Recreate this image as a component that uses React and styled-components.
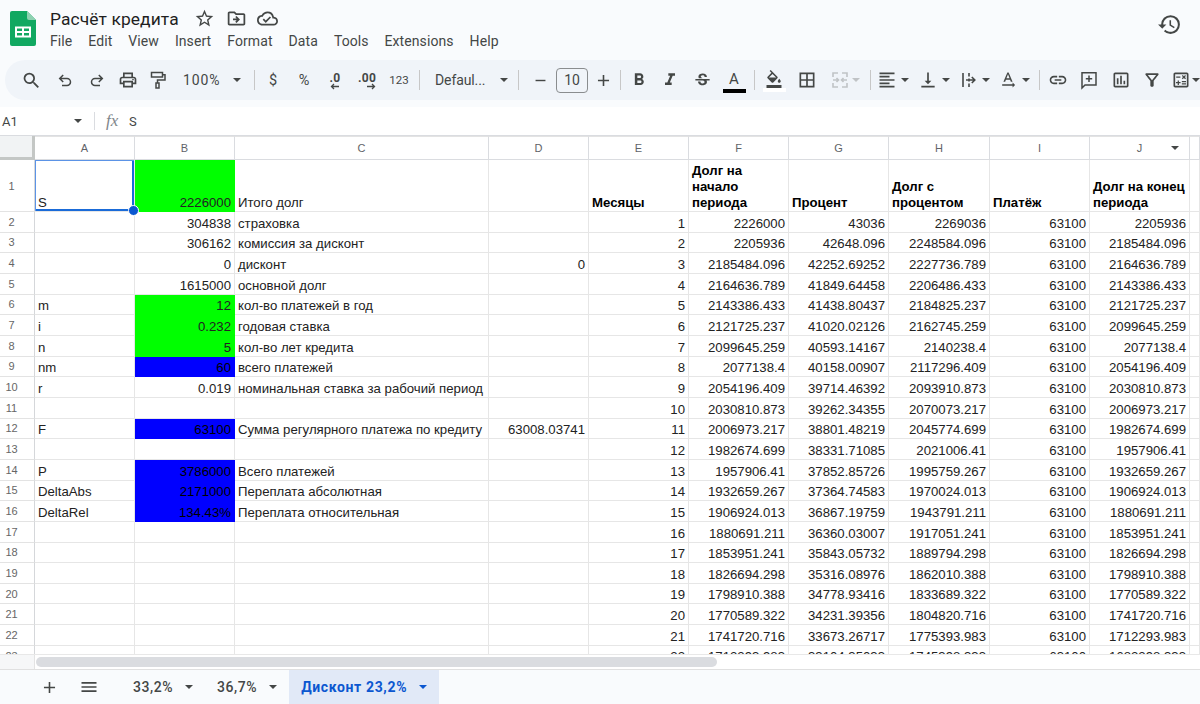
import React from 'react'
import styled, { createGlobalStyle } from 'styled-components'
import {
  MdSearch, MdOutlinePrint, MdFormatBold, MdFormatItalic,
  MdStrikethroughS, MdFormatColorFill, MdBorderAll, MdFormatAlignLeft, MdVerticalAlignBottom,
  MdTextRotationNone, MdLink, MdOutlineInsertChart, MdOutlineFilterAlt,
  MdOutlineCalculate, MdStarBorder, MdOutlineDriveFileMove, MdOutlineCloudDone, MdHistory,
  MdAdd, MdMenu, MdRemove,
} from 'react-icons/md'

const GlobalStyle = createGlobalStyle`
  html, body { margin: 0; padding: 0; background: #f9fbfd; overflow: hidden; }
  * { box-sizing: border-box; }
`

const months = [
  ['2226000', '43036', '2269036', '2205936'],
  ['2205936', '42648.096', '2248584.096', '2185484.096'],
  ['2185484.096', '42252.69252', '2227736.789', '2164636.789'],
  ['2164636.789', '41849.64458', '2206486.433', '2143386.433'],
  ['2143386.433', '41438.80437', '2184825.237', '2121725.237'],
  ['2121725.237', '41020.02126', '2162745.259', '2099645.259'],
  ['2099645.259', '40593.14167', '2140238.4', '2077138.4'],
  ['2077138.4', '40158.00907', '2117296.409', '2054196.409'],
  ['2054196.409', '39714.46392', '2093910.873', '2030810.873'],
  ['2030810.873', '39262.34355', '2070073.217', '2006973.217'],
  ['2006973.217', '38801.48219', '2045774.699', '1982674.699'],
  ['1982674.699', '38331.71085', '2021006.41', '1957906.41'],
  ['1957906.41', '37852.85726', '1995759.267', '1932659.267'],
  ['1932659.267', '37364.74583', '1970024.013', '1906924.013'],
  ['1906924.013', '36867.19759', '1943791.211', '1880691.211'],
  ['1880691.211', '36360.03007', '1917051.241', '1853951.241'],
  ['1853951.241', '35843.05732', '1889794.298', '1826694.298'],
  ['1826694.298', '35316.08976', '1862010.388', '1798910.388'],
  ['1798910.388', '34778.93416', '1833689.322', '1770589.322'],
  ['1770589.322', '34231.39356', '1804820.716', '1741720.716'],
  ['1741720.716', '33673.26717', '1775393.983', '1712293.983'],
  ['1712293.983', '33104.35033', '1745398.333', '1682298.333'],
]

// columns A-D for rows 2..23: label, value, fill, description, extra
const leftRows = [
  ['', '304838', '', 'страховка', ''],
  ['', '306162', '', 'комиссия за дисконт', ''],
  ['', '0', '', 'дисконт', '0'],
  ['', '1615000', '', 'основной долг', ''],
  ['m', '12', '#00ff00', 'кол-во платежей в год', ''],
  ['i', '0.232', '#00ff00', 'годовая ставка', ''],
  ['n', '5', '#00ff00', 'кол-во лет кредита', ''],
  ['nm', '60', '#0000ff', 'всего платежей', ''],
  ['r', '0.019', '', 'номинальная ставка за рабочий период', ''],
  ['', '', '', '', ''],
  ['F', '63100', '#0000ff', 'Сумма регулярного платежа по кредиту', '63008.03741'],
  ['', '', '', '', ''],
  ['P', '3786000', '#0000ff', 'Всего платежей', ''],
  ['DeltaAbs', '2171000', '#0000ff', 'Переплата абсолютная', ''],
  ['DeltaRel', '134.43%', '#0000ff', 'Переплата относительная', ''],
]

const columns = ['A', 'B', 'C', 'D', 'E', 'F', 'G', 'H', 'I', 'J', '']
const menus = ['File', 'Edit', 'View', 'Insert', 'Format', 'Data', 'Tools', 'Extensions', 'Help']

function SheetsLogo() {
  return (
    <svg width="26" height="35" viewBox="0 0 26 35">
      <path d="M2 0H17L26 9V33a2 2 0 0 1-2 2H2a2 2 0 0 1-2-2V2a2 2 0 0 1 2-2z" fill="#11a861" />
      <path d="M17 0L26 9H19a2 2 0 0 1-2-2z" fill="#8ed1b1" />
      <path d="M5 15.5H21V26.5H5zM7 17.500V20H12V17.500zM14 17.500V20H19V17.500zM7 22V24.500H12V22zM14 22V24.500H19V22z" fill="#fff" fillRule="evenodd" />
    </svg>
  )
}

function UndoIcon() {
  return (
    <svg width="18" height="18" viewBox="0 0 18 18" fill="none" stroke="#444746" strokeWidth="1.500">
      <path d="M4 7.500H11a3.500 3.500 0 0 1 0 7H6M7.200 4L3.700 7.500L7.200 11" />
    </svg>
  )
}

function RedoIcon() {
  return (
    <svg width="18" height="18" viewBox="0 0 18 18" fill="none" stroke="#444746" strokeWidth="1.500">
      <path d="M14 7.500H7a3.500 3.500 0 0 0 0 7H12M10.800 4L14.300 7.500L10.800 11" />
    </svg>
  )
}

function PaintIcon() {
  return (
    <svg width="20" height="20" viewBox="0 0 20 20" fill="none" stroke="#444746" strokeWidth="1.500">
      <path d="M3.500 2.500H14.500V7H3.500zM14.500 4.700H17V10H9.500V13M8 13H11V18H8z" />
    </svg>
  )
}

function MergeIcon() {
  return (
    <svg width="20" height="20" viewBox="0 0 20 20" fill="none" stroke="#c0c3c6" strokeWidth="1.600">
      <path d="M3 7V3H8M12 3H17V7M3 13V17H8M12 17H17V13M3 10H8M6.500 8L8.500 10L6.500 12M17 10H12M13.500 8L11.500 10L13.500 12" />
    </svg>
  )
}

function WrapIcon() {
  return (
    <svg width="20" height="20" viewBox="0 0 20 20" fill="none" stroke="#444746" strokeWidth="1.600">
      <path d="M4 3V17M10 3V6.500M10 8.500V11.500M10 13.500V17M7 10H15.500M12.800 7L15.800 10L12.800 13" />
    </svg>
  )
}

function CommentIcon() {
  return (
    <svg width="20" height="20" viewBox="0 0 20 20" fill="none" stroke="#444746" strokeWidth="1.500">
      <path d="M3 2.800H17V15H6L3 18zM10 5.500V12M6.800 8.800H13.200" />
    </svg>
  )
}

function App() {
  return (
    <>
      <GlobalStyle />
      <Page>
        <TopBar>
          <LogoBox><SheetsLogo /></LogoBox>
          <TitleBlock>
            <TitleRow>
              <Title>Расчёт кредита</Title>
              <TitleIcons>
                <MdStarBorder size={21} />
                <MdOutlineDriveFileMove size={21} />
                <MdOutlineCloudDone size={21} />
              </TitleIcons>
            </TitleRow>
            <MenuRow>
              {menus.map((m) => <MenuItem key={m}>{m}</MenuItem>)}
            </MenuRow>
          </TitleBlock>
          <HistoryBox><MdHistory size={25} /></HistoryBox>
        </TopBar>

        <Toolbar>
          <Tool $w={32}><MdSearch size={21} /></Tool>
          <Tool $w={2} />
          <Tool $w={32}><UndoIcon /></Tool>
          <Tool $w={32}><RedoIcon /></Tool>
          <Tool $w={30}><MdOutlinePrint size={20} /></Tool>
          <Tool $w={30}><PaintIcon /></Tool>
          <SelectTool $w={72} $left={10} $gap={13}><ToolText $ls={0.9}>100%</ToolText><Caret /></SelectTool>
          <Tool $w={18}><Sep /></Tool>
          <Tool $w={20}><SmallText>$</SmallText></Tool>
          <Tool $w={42}><SmallText>%</SmallText></Tool>
          <Tool $w={20}><Decimal>.0<svg width="10" height="7" viewBox="0 0 10 7"><path d="M9 3.500H2M4 1L1.500 3.500L4 6" fill="none" stroke="#444746" strokeWidth="1.300" /></svg></Decimal></Tool>
          <Tool $w={44}><Decimal>.00<svg width="10" height="7" viewBox="0 0 10 7"><path d="M1 3.500H8M6 1L8.500 3.500L6 6" fill="none" stroke="#444746" strokeWidth="1.300" /></svg></Decimal></Tool>
          <Tool $w={20}><TinyText>123</TinyText></Tool>
          <Tool $w={20}><Sep /></Tool>
          <SelectTool $w={83} $left={6} $gap={15}><ToolText $ls={-0.1}>Defaul...</ToolText><Caret /></SelectTool>
          <Tool $w={12}><Sep /></Tool>
          <Tool $w={32}><MdRemove size={17} /></Tool>
          <Tool $w={32}><SizeBox>10</SizeBox></Tool>
          <Tool $w={30}><MdAdd size={19} /></Tool>
          <Tool $w={4}><Sep /></Tool>
          <Tool $w={34}><MdFormatBold size={20} /></Tool>
          <Tool $w={28}><MdFormatItalic size={20} /></Tool>
          <Tool $w={36}><MdStrikethroughS size={19} /></Tool>
          <Tool $w={28}><ColorStack><ColorLetter>A</ColorLetter><ColorBar $color="#000" /></ColorStack></Tool>
          <Tool $w={12}><Sep /></Tool>
          <Tool $w={28}><ColorStack><MdFormatColorFill size={18} /><ColorBar $color="#fff" /></ColorStack></Tool>
          <Tool $w={38}><MdBorderAll size={20} /></Tool>
          <SelectTool $w={40} $left={4} $gap={2}><MergeIcon /><Caret $color="#c0c3c6" /></SelectTool>
          <Tool $w={8}><Sep /></Tool>
          <SelectTool $w={42} $left={3} $gap={4}><MdFormatAlignLeft size={20} /><Caret /></SelectTool>
          <SelectTool $w={42} $left={2} $gap={4}><MdVerticalAlignBottom size={20} /><Caret /></SelectTool>
          <SelectTool $w={40} $left={1} $gap={3}><WrapIcon /><Caret /></SelectTool>
          <SelectTool $w={37} $left={0} $gap={4}><MdTextRotationNone size={20} /><Caret /></SelectTool>
          <Tool $w={8}><Sep /></Tool>
          <Tool $w={30}><MdLink size={20} /></Tool>
          <Tool $w={32}><CommentIcon /></Tool>
          <Tool $w={31}><MdOutlineInsertChart size={20} /></Tool>
          <Tool $w={32}><MdOutlineFilterAlt size={20} /></Tool>
          <SelectTool $w={40} $left={3} $gap={1}><MdOutlineCalculate size={20} /><Caret /></SelectTool>
        </Toolbar>

        <FormulaBar>
          <NameBox>A1<Caret /></NameBox>
          <FormulaSep />
          <FxLabel>fx</FxLabel>
          <FormulaValue>S</FormulaValue>
        </FormulaBar>

        <Sheet>
          <Corner />
          {columns.map((c, i) => (
            <ColHead key={i}>
              {c}
              {c === 'J' && <FilterCaret><Caret /></FilterCaret>}
            </ColHead>
          ))}

          <RowHead>1</RowHead>
          <Cell $selected>S<Handle /></Cell>
          <Cell $right $fill="#00ff00">2226000</Cell>
          <Cell>Итого долг</Cell>
          <Cell />
          <Cell $bold>Месяцы</Cell>
          <Cell $bold>Долг на<br />начало<br />периода</Cell>
          <Cell $bold>Процент</Cell>
          <Cell $bold>Долг с<br />процентом</Cell>
          <Cell $bold>Платёж</Cell>
          <Cell $bold>Долг на конец<br />периода</Cell>
          <Cell />

          {months.map((m, i) => {
            const left = leftRows[i] || ['', '', '', '', '']
            return (
              <React.Fragment key={i}>
                <RowHead>{i + 2}</RowHead>
                <Cell>{left[0]}</Cell>
                <Cell $right $fill={left[2]}>{left[1]}</Cell>
                <Cell>{left[3]}</Cell>
                <Cell $right>{left[4]}</Cell>
                <Cell $right>{i + 1}</Cell>
                <Cell $right>{m[0]}</Cell>
                <Cell $right>{m[1]}</Cell>
                <Cell $right>{m[2]}</Cell>
                <Cell $right>63100</Cell>
                <Cell $right>{m[3]}</Cell>
                <Cell />
              </React.Fragment>
            )
          })}
        </Sheet>

        <ScrollStrip>
          <ScrollCorner />
          <ScrollThumb />
        </ScrollStrip>

        <TabBar>
          <TabTool><MdAdd size={19} /></TabTool>
          <TabTool><MdMenu size={20} /></TabTool>
          <TabSpacer />
          <Tab>33,2%<Caret /></Tab>
          <Tab>36,7%<Caret /></Tab>
          <Tab $active>Дисконт 23,2%<Caret $color="#0b57d0" /></Tab>
        </TabBar>
      </Page>
    </>
  )
}

const Page = styled.div`
  width: 1200px;
  height: 704px;
  display: flex;
  flex-direction: column;
  overflow: hidden;
  background: #f9fbfd;
  color: #444746;
  font-family: Roboto, "Liberation Sans", sans-serif;
`
const TopBar = styled.header`
  height: 60px;
  flex: none;
  display: flex;
  align-items: flex-start;
`
const LogoBox = styled.div`
  width: 50px;
  padding: 11px 0 0 10px;
  line-height: 0;
`
const TitleBlock = styled.div`
  flex: 1;
  padding-top: 7px;
`
const TitleRow = styled.div`
  display: flex;
  align-items: center;
  height: 23px;
`
const Title = styled.div`
  font-size: 17.400px;
  color: #1f1f1f;
  width: 144px;
  letter-spacing: 0.1px;
`
const TitleIcons = styled.div`
  display: flex;
  gap: 10.500px;
  color: #444746;
`
const MenuRow = styled.nav`
  display: flex;
  gap: 16px;
  margin-top: 1px;
`
const MenuItem = styled.span`
  font-size: 14px;
  line-height: 20px;
  letter-spacing: 0.08px;
  color: #444746;
`
const HistoryBox = styled.div`
  width: 62px;
  padding: 12px 0 0 19px;
  color: #444746;
`
const Toolbar = styled.div`
  height: 40px;
  flex: none;
  margin: 0 -40px 7px 5px;
  padding-left: 10px;
  display: flex;
  align-items: center;
  background: #f0f4f9;
  border-radius: 20px 0 0 20px;
`
const Tool = styled.div`
  width: ${(p) => p.$w}px;
  flex: none;
  height: 100%;
  display: flex;
  align-items: center;
  justify-content: center;
  color: #444746;
`
const SelectTool = styled(Tool)`
  justify-content: flex-start;
  padding-left: ${(p) => p.$left}px;
  gap: ${(p) => p.$gap}px;
`
const Sep = styled.div`
  width: 1px;
  height: 20px;
  background: #c7c7c7;
`
const ToolText = styled.span`
  font-size: 14px;
  letter-spacing: ${(p) => p.$ls}px;
`
const SmallText = styled.span`
  font-size: 14.500px;
`
const TinyText = styled.span`
  font-size: 11.500px;
`
const Decimal = styled.span`
  position: relative;
  top: 1px;
  font-size: 12px;
  font-weight: 700;
  display: flex;
  flex-direction: column;
  align-items: flex-end;
  line-height: 12px;
  letter-spacing: 0.3px;
  svg { margin-top: -1px; }
`
const SizeBox = styled.div`
  width: 32px;
  height: 25px;
  border: 1px solid #8a8d8f;
  border-radius: 4px;
  display: flex;
  align-items: center;
  justify-content: center;
  font-size: 14px;
`
const ColorStack = styled.div`
  position: relative;
  top: 1px;
  display: flex;
  flex-direction: column;
  align-items: center;
  width: 24px;
`
const ColorLetter = styled.span`
  font-size: 15px;
  line-height: 19px;
`
const ColorBar = styled.div`
  width: 23px;
  height: 4px;
  background: ${(p) => p.$color};
`
const Caret = styled.span`
  display: inline-block;
  flex: none;
  width: 0;
  height: 0;
  border-left: 4px solid transparent;
  border-right: 4px solid transparent;
  border-top: 4px solid ${(p) => p.$color || '#444746'};
`
const FormulaBar = styled.div`
  height: 29px;
  flex: none;
  display: flex;
  align-items: center;
  background: #fff;
  border-bottom: 1px solid #dadce0;
  font-size: 13px;
  color: #444746;
`
const NameBox = styled.div`
  width: 94px;
  padding: 0 12px 0 2px;
  display: flex;
  align-items: center;
  justify-content: space-between;
`
const FormulaSep = styled.div`
  width: 1px;
  height: 18px;
  background: #dadce0;
`
const FxLabel = styled.span`
  margin-left: 11px;
  width: 23px;
  font-family: "Liberation Serif", serif;
  font-style: italic;
  font-size: 17px;
  color: #80868b;
`
const FormulaValue = styled.span`
  font-size: 13px;
`
const Sheet = styled.div`
  flex: 1;
  min-height: 0;
  overflow: hidden;
  display: grid;
  grid-template-columns: 35px 100px 100px 254px 100px 100px 100px 100px 101px 100px 100px 10px;
  grid-template-rows: 24px 52px repeat(22, 20.660px);
  background: #fff;
  font-family: "Liberation Sans", Arial, sans-serif;
`
const Corner = styled.div`
  background: #f1f3f4;
  border-right: 3px solid #c4c7c5;
  border-bottom: 3px solid #c4c7c5;
`
const ColHead = styled.div`
  position: relative;
  display: flex;
  align-items: center;
  justify-content: center;
  font-size: 11px;
  color: #5f6368;
  background: #fff;
  border-right: 1px solid #dadce0;
  border-bottom: 1px solid #dadce0;
  border-top: 1px solid #e3e3e3;
`
const FilterCaret = styled.span`
  position: absolute;
  right: 10px;
  top: 9px;
  line-height: 0;
`
const RowHead = styled.div`
  display: flex;
  align-items: center;
  justify-content: center;
  padding-right: 11px;
  font-size: 11px;
  color: #666;
  background: #fff;
  border-right: 1px solid #d5d7da;
  border-bottom: 1px solid #e3e3e3;
`
const Cell = styled.div`
  position: relative;
  padding: 0 3px;
  font-size: 13.200px;
  line-height: 16px;
  color: ${(p) => (p.$bold ? '#000' : '#222')};
  font-weight: ${(p) => (p.$bold ? 700 : 400)};
  text-align: ${(p) => (p.$right ? 'right' : 'left')};
  background: ${(p) => p.$fill || '#fff'};
  white-space: nowrap;
  border-right: 1px solid ${(p) => (p.$fill ? 'transparent' : '#e6e6e6')};
  border-bottom: 1px solid ${(p) => (p.$fill ? 'transparent' : '#e6e6e6')};
  box-shadow: ${(p) => (p.$selected ? 'inset 1px 1px 0 #5b93e6, inset -2px -2px 0 #1a6bd8' : 'none')};
  display: ${(p) => (p.$bold ? 'block' : 'flex')};
  align-content: end;
  align-items: flex-end;
  justify-content: ${(p) => (p.$right ? 'flex-end' : 'flex-start')};
  ${(p) => (p.$fill === '#0000ff' ? 'color: #000;' : '')}
`
const Handle = styled.span`
  position: absolute;
  right: -5px;
  bottom: -5px;
  width: 9px;
  height: 9px;
  border-radius: 50%;
  background: #0b57d0;
  border: 1px solid #fff;
  box-sizing: content-box;
  z-index: 2;
`
const ScrollStrip = styled.div`
  height: 16px;
  flex: none;
  display: flex;
  align-items: center;
  background: #fff;
  border-top: 1px solid #e8e8e8;
  border-bottom: 1px solid #e0e0e0;
`
const ScrollCorner = styled.div`
  width: 35px;
  height: 100%;
  background: #f6f7f8;
  border-right: 1px solid #e3e3e3;
`
const ScrollThumb = styled.div`
  width: 681px;
  height: 10px;
  margin-left: 1px;
  background: #dadce0;
  border-radius: 5px;
`
const TabBar = styled.footer`
  height: 34px;
  flex: none;
  display: flex;
  align-items: stretch;
  background: #f9fbfd;
`
const TabTool = styled.div`
  width: 40px;
  display: flex;
  align-items: center;
  justify-content: center;
  &:first-child { margin-left: 29px; }
`
const TabSpacer = styled.div`
  width: 12px;
`
const Tab = styled.div`
  display: flex;
  align-items: center;
  gap: 12px;
  padding: 0 12px;
  font-size: 14px;
  letter-spacing: ${(p) => (p.$active ? 0.65 : 0.55)}px;
  font-weight: ${(p) => (p.$active ? 700 : 500)};
  color: ${(p) => (p.$active ? '#0b57d0' : '#444746')};
  background: ${(p) => (p.$active ? '#e1e9f7' : 'transparent')};
`

export default App
